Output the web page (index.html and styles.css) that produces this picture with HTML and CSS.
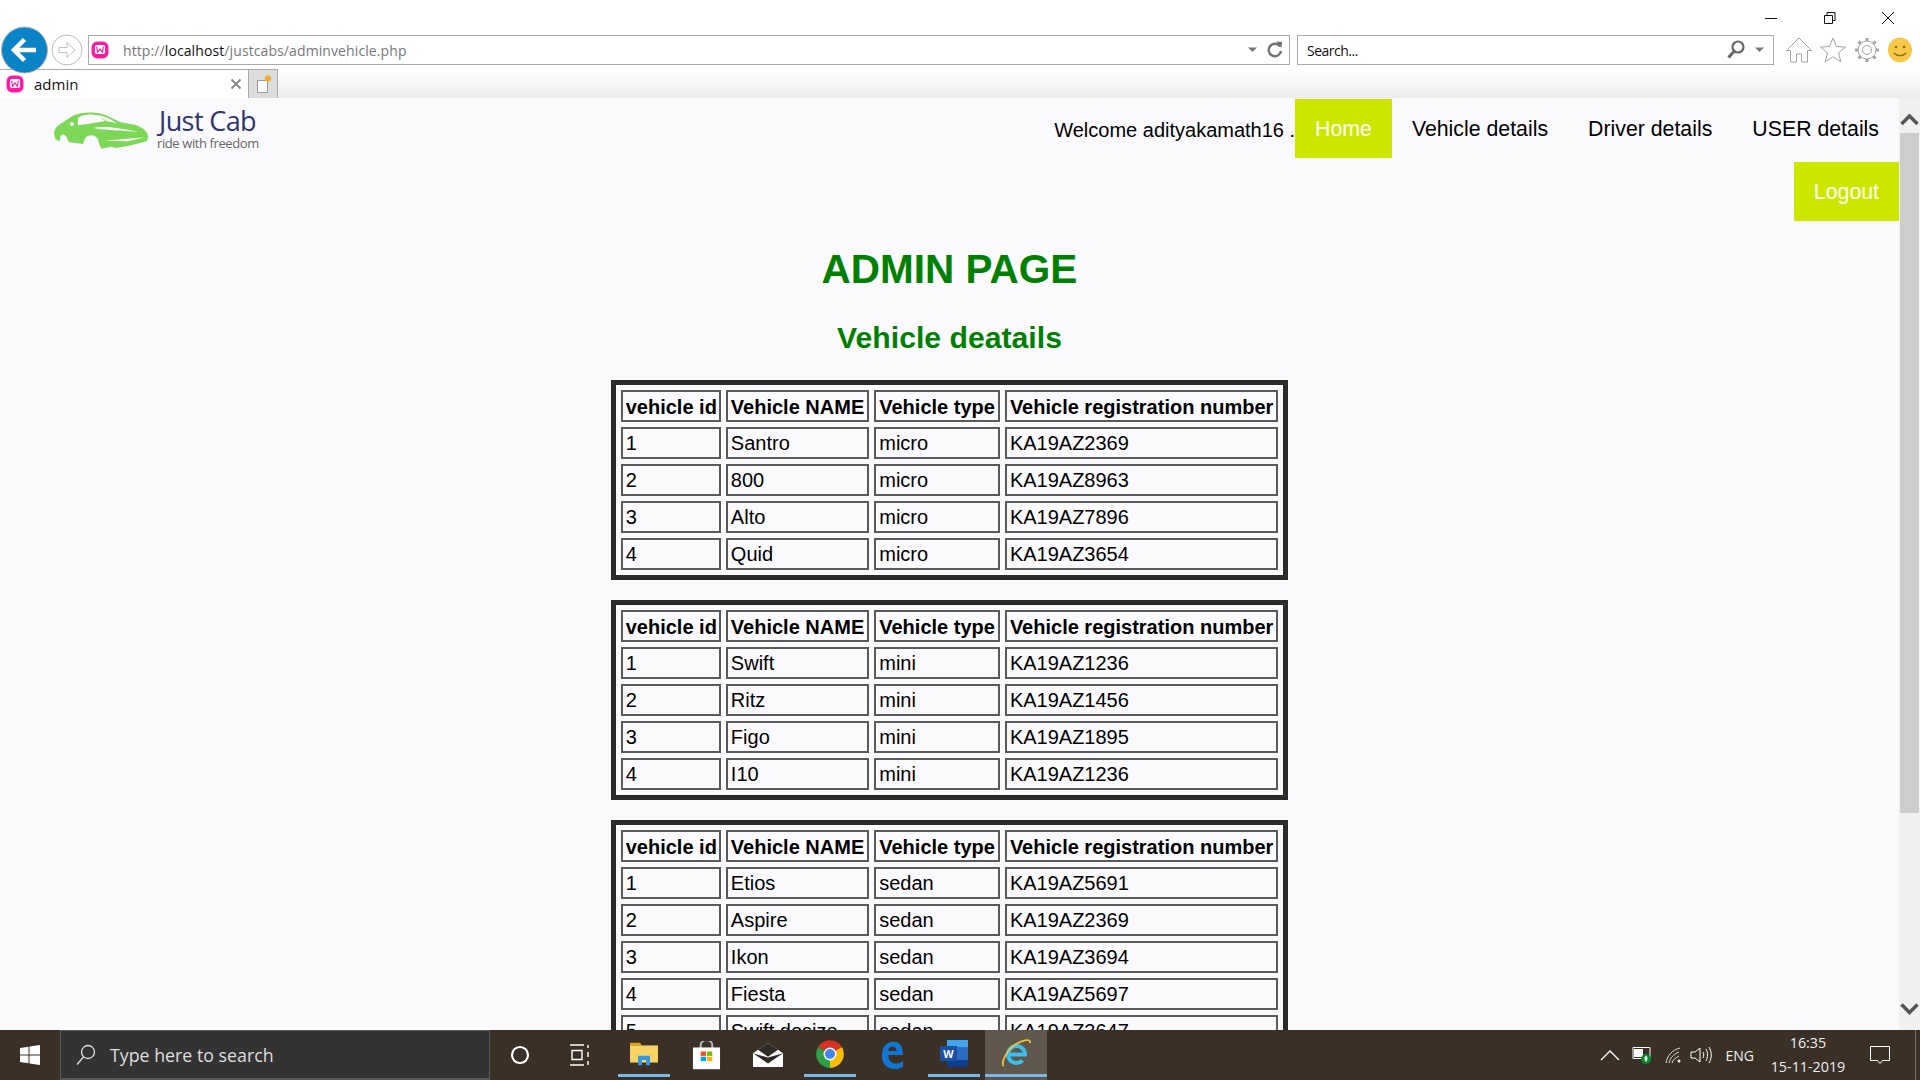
FILE: index.html
```html
<!DOCTYPE html>
<html lang="en">
<head>
  <meta charset="UTF-8">
  <title>admin</title>
  <link rel="stylesheet" href="styles.css">
</head>
<body>
  <!-- Browser chrome -->
  <div class="browser">
    <div class="titlebar">
      <svg class="win-btn" width="58" height="35" viewBox="0 0 58 35"><path d="M23 18.500h12" stroke="#111" fill="none"/></svg>
      <svg class="win-btn" width="58" height="35" viewBox="0 0 58 35"><path d="M24.500 15.500h8v8h-8zM27 15.500v-3h8v8h-2.500" stroke="#111" fill="none"/></svg>
      <svg class="win-btn" width="60" height="35" viewBox="0 0 60 35"><path d="M24 12l12 12M36 12l-12 12" stroke="#111" fill="none"/></svg>
    </div>

    <div class="toolbar">
      <div class="address-box">
        <svg class="favicon" width="18" height="18" viewBox="0 0 16 16"><rect x="0.500" y="0.500" width="15" height="15" rx="5" fill="#ff1aa3"/><rect x="3.500" y="3.500" width="9" height="8" rx="1.500" fill="#fff"/><path d="M5 5l.8 5 2.200-3 2.200 3 .8-5" stroke="#ff1aa3" fill="none"/></svg>
        <span class="url">http://<b>localhost</b>/justcabs/adminvehicle.php</span>
        <svg width="12" height="8" viewBox="0 0 12 8"><path d="M1 1.500h9L5.500 6z" fill="#777"/></svg>
        <svg class="refresh" width="20" height="20" viewBox="0 0 20 20"><path d="M15 6.500A6.200 6.200 0 1 0 16 11" stroke="#6f6f6f" stroke-width="2.400" fill="none"/><path d="M11 1.500l6 .5-.5 6z" fill="#6f6f6f"/></svg>
      </div>
      <div class="search-box">
        <span class="search-text">Search...</span>
        <svg width="20" height="22" viewBox="0 0 20 22"><circle cx="12" cy="8" r="5.500" stroke="#666" stroke-width="2.200" fill="none"/><path d="M8 12.500L2.500 18.500" stroke="#666" stroke-width="3"/></svg>
        <svg class="search-arrow" width="12" height="8" viewBox="0 0 12 8"><path d="M1 1.500h9L5.500 6z" fill="#777"/></svg>
      </div>
      <div class="tool-icons">
        <svg width="28" height="28" viewBox="0 0 28 28"><path d="M14 2L1.500 14.500h4V26h6v-8h5v8h6V14.500h4z" stroke="#a3a3a3" fill="#fff"/></svg>
        <svg width="28" height="28" viewBox="0 0 28 28"><path d="M14 2l3.500 8.500 9 .6-7 5.700 2.300 8.900L14 20.800l-7.800 4.900 2.300-8.900-7-5.700 9-.6z" stroke="#a3a3a3" fill="#fff"/></svg>
        <svg width="28" height="28" viewBox="0 0 28 28"><circle cx="14" cy="14" r="4.500" stroke="#a3a3a3" fill="none"/><circle cx="14" cy="14" r="9" stroke="#a3a3a3" fill="none"/><path d="M14 2v3M14 23v3M2 14h3M23 14h3M5.500 5.500l2.200 2.200M20.300 20.300l2.200 2.200M5.500 22.500l2.200-2.200M20.300 7.700l2.200-2.200" stroke="#a3a3a3" stroke-width="3"/></svg>
        <svg width="26" height="28" viewBox="0 0 26 28"><ellipse cx="13" cy="14" rx="12" ry="12.500" fill="#f5c744"/><circle cx="9" cy="11" r="1.300" fill="#8a6d1f"/><circle cx="17" cy="11" r="1.300" fill="#8a6d1f"/><path d="M7 17c3 3.500 9 3.500 12 0" stroke="#8a6d1f" stroke-width="1.300" fill="none"/></svg>
      </div>
    </div>

    <div class="tabstrip">
      <div class="tab">
        <svg width="18" height="18" viewBox="0 0 16 16"><rect x="0.500" y="0.500" width="15" height="15" rx="5" fill="#ff1aa3"/><rect x="3.500" y="3.500" width="9" height="8" rx="1.500" fill="#fff"/><path d="M5 5l.8 5 2.200-3 2.200 3 .8-5" stroke="#ff1aa3" fill="none"/></svg>
        <span class="tab-title">admin</span>
        <svg width="12" height="12" viewBox="0 0 12 12"><path d="M1.500 1.500l9 9M10.500 1.500l-9 9" stroke="#8a8a8a" stroke-width="2"/></svg>
      </div>
      <div class="new-tab">
        <svg width="18" height="20" viewBox="0 0 18 20"><path d="M3.500 6.500h10v12h-10z" fill="#fff" stroke="#999"/><path d="M14 1v7M10.500 4.500h7M11.500 2l5 5M16.500 2l-5 5" stroke="#f5a623" stroke-width="1.300"/></svg>
      </div>
    </div>

    <!-- back and forward sit over the toolbar and tab strip -->
    <svg class="nav-circles" width="86" height="50" viewBox="0 0 86 50">
      <circle cx="24.500" cy="25" r="23" fill="#0a84c6" stroke="#b5b5b5"/>
      <path d="M14 25h22M24.500 14.500L14 25l10.500 10.500" stroke="#fff" stroke-width="4.500" fill="none"/>
      <circle cx="67" cy="25" r="15" fill="#fff" stroke="#b9b9b9"/>
      <path d="M59 22.500h8v-5l8 7.500-8 7.500v-5h-8z" fill="#fff" stroke="#c2c2c2"/>
    </svg>
  </div>

  <div class="viewport">
    <div class="page">
      <div class="topbar">
        <div class="logo">
          <svg width="110" height="44" viewBox="0 0 330 132">
            <path d="M18 76C20 62 28 52 45 43L75 23C95 14 118 12 140 14C165 15 190 28 215 42L260 50C280 56 292 66 297 74L301 86L296 100L250 112L205 120L190 116L160 122L155 112C152 95 145 82 130 82C116 82 108 92 106 108L62 102L58 92C52 80 44 76 38 84L35 100L22 94z" fill="#7dd857"/>
            <path d="M90 30C98 22 118 19 136 20C150 21 160 30 172 39L120 48L89 52z" fill="#fafafd"/>
            <path d="M142 20C165 22 190 34 208 46L178 40z" fill="#fafafd"/>
            <path d="M135 60C165 54 205 58 272 72C235 68 180 68 135 60z" fill="#fafafd"/>
            <path d="M215 66L262 102L200 112C210 92 212 80 215 66z" fill="#7dd857"/>
            <circle cx="72" cy="48" r="6" fill="#fafafd"/>
            <path d="M170 98L290 88L240 100z" fill="#fafafd"/>
          </svg>
          <div class="logo-text">
            <div class="logo-name">Just Cab</div>
            <div class="logo-sub">ride with freedom</div>
          </div>
        </div>
        <ul class="nav-menu">
          <li class="welcome">Welcome adityakamath16 .</li>
          <li class="nav-link active">Home</li>
          <li class="nav-link">Vehicle details</li>
          <li class="nav-link">Driver details</li>
          <li class="nav-link">USER details</li>
          <li class="nav-link active">Logout</li>
        </ul>
      </div>

      <h1 class="page-title">ADMIN PAGE</h1>
      <h2 class="page-subtitle">Vehicle deatails</h2>

      <table class="vehicle-table">
        <tr><th>vehicle id</th><th>Vehicle NAME</th><th>Vehicle type</th><th>Vehicle registration number</th></tr>
        <tr><td>1</td><td>Santro</td><td>micro</td><td>KA19AZ2369</td></tr>
        <tr><td>2</td><td>800</td><td>micro</td><td>KA19AZ8963</td></tr>
        <tr><td>3</td><td>Alto</td><td>micro</td><td>KA19AZ7896</td></tr>
        <tr><td>4</td><td>Quid</td><td>micro</td><td>KA19AZ3654</td></tr>
      </table>

      <table class="vehicle-table">
        <tr><th>vehicle id</th><th>Vehicle NAME</th><th>Vehicle type</th><th>Vehicle registration number</th></tr>
        <tr><td>1</td><td>Swift</td><td>mini</td><td>KA19AZ1236</td></tr>
        <tr><td>2</td><td>Ritz</td><td>mini</td><td>KA19AZ1456</td></tr>
        <tr><td>3</td><td>Figo</td><td>mini</td><td>KA19AZ1895</td></tr>
        <tr><td>4</td><td>I10</td><td>mini</td><td>KA19AZ1236</td></tr>
      </table>

      <table class="vehicle-table">
        <tr><th>vehicle id</th><th>Vehicle NAME</th><th>Vehicle type</th><th>Vehicle registration number</th></tr>
        <tr><td>1</td><td>Etios</td><td>sedan</td><td>KA19AZ5691</td></tr>
        <tr><td>2</td><td>Aspire</td><td>sedan</td><td>KA19AZ2369</td></tr>
        <tr><td>3</td><td>Ikon</td><td>sedan</td><td>KA19AZ3694</td></tr>
        <tr><td>4</td><td>Fiesta</td><td>sedan</td><td>KA19AZ5697</td></tr>
        <tr><td>5</td><td>Swift desize</td><td>sedan</td><td>KA19AZ3647</td></tr>
      </table>
    </div>

    <div class="scrollbar">
      <svg class="scroll-arrow" width="21" height="35" viewBox="0 0 21 35"><path d="M2.500 26l8-8 8 8" stroke="#555" stroke-width="3.500" fill="none"/></svg>
      <div class="scroll-thumb"></div>
      <svg class="scroll-arrow" width="21" height="35" viewBox="0 0 21 35"><path d="M2.500 9.500l8 8 8-8" stroke="#555" stroke-width="3.500" fill="none"/></svg>
    </div>
  </div>

  <!-- Windows taskbar -->
  <div class="taskbar">
    <div class="start">
      <svg width="20" height="20" viewBox="0 0 20 20"><path d="M0 3l8.500-1.200v7.700H0zM9.500 1.600L20 0v9.500H9.500zM0 10.500h8.500v7.700L0 17zM9.500 10.500H20V20L9.500 18.400z" fill="#fff"/></svg>
    </div>
    <div class="task-search">
      <svg width="22" height="24" viewBox="0 0 22 24"><circle cx="13" cy="9" r="6.500" stroke="#ddd" stroke-width="1.300" fill="none"/><path d="M8.500 14L2 21.500" stroke="#ddd" stroke-width="1.300"/></svg>
      <span>Type here to search</span>
    </div>
    <div class="task-btn small">
      <svg width="20" height="20" viewBox="0 0 20 20"><circle cx="10" cy="10" r="8" stroke="#fff" stroke-width="2.200" fill="none"/></svg>
    </div>
    <div class="task-btn small task-view">
      <svg width="22" height="22" viewBox="0 0 22 22"><path d="M1 1h14M1 21h14M3 6.500h10v9H3zM19 1v3M19 8v5M19 17v4" stroke="#fff" stroke-width="1.400" fill="none"/></svg>
    </div>
    <div class="task-btn running">
      <svg width="28" height="24" viewBox="0 0 28 28" preserveAspectRatio="none"><path d="M0 1h10l2 3H0z" fill="#e3a21a"/><path d="M0 4h28v20H0z" fill="#f6d365"/><path d="M8 27V16h12v11h-4v-6h-4v6z" fill="#3a96dd"/></svg>
    </div>
    <div class="task-btn">
      <svg width="29" height="29" viewBox="0 0 30 36" preserveAspectRatio="none"><path d="M9 9V5a6 6 0 0 1 12 0v4" stroke="#bbb" stroke-width="2" fill="none"/><path d="M1 8h28v27H1z" fill="#fff"/><rect x="9" y="13" width="5.500" height="5.500" fill="#f25022"/><rect x="15.500" y="13" width="5.500" height="5.500" fill="#7fba00"/><rect x="9" y="19.500" width="5.500" height="5.500" fill="#00a4ef"/><rect x="15.500" y="19.500" width="5.500" height="5.500" fill="#ffb900"/></svg>
    </div>
    <div class="task-btn">
      <svg width="30" height="24" viewBox="0 0 30 28" preserveAspectRatio="none"><path d="M15 0L30 12v16H0V12z" fill="#fff"/><path d="M0 12l15 12 15-12-15 5z" fill="#2f2a25"/><path d="M15 0L5 8l10 8 10-8z" fill="#2f2a25"/></svg>
    </div>
    <div class="task-btn running">
      <svg width="28" height="28" viewBox="0 0 28 28"><path d="M14 14L2 7A14 14 0 0 1 26 7z" fill="#d93025"/><path d="M14 14L2 7A14 14 0 0 0 14 28z" fill="#2f9e44"/><path d="M14 14L26 7A14 14 0 0 1 14 28z" fill="#fbbc04"/><circle cx="14" cy="14" r="6.500" fill="#fff"/><circle cx="14" cy="14" r="5" fill="#4285f4"/></svg>
    </div>
    <div class="task-btn">
      <svg width="24" height="28" viewBox="0 0 26 36" preserveAspectRatio="none"><path d="M2 19C2 8 7 1 15 1c6 0 10 6 10 17H9c0 7 3 11 8 11 3 0 5-1 8-3v7c-3 2-6 3-9 3C7 36 2 29 2 19zm7-6h9c0-4-2-6-4-6-3 0-5 2-5 6z" fill="#0f78d4"/></svg>
    </div>
    <div class="task-btn running">
      <svg width="28" height="27" viewBox="0 0 28 27"><rect x="7" y="0" width="21" height="27" rx="1" fill="#2b6cc4"/><rect x="7" y="0" width="21" height="7" fill="#41a5ee"/><rect x="7" y="20" width="21" height="7" fill="#103f91"/><rect x="0" y="6" width="17" height="15" fill="#1a4fa3"/><text x="8.500" y="18" class="word-letter">W</text></svg>
    </div>
    <div class="task-btn running ie-active">
      <svg width="30" height="29" viewBox="0 0 30 29"><path d="M8 15.500H24A8.500 8.500 0 1 0 21.500 21.500" stroke="#3bc0ee" stroke-width="4" fill="none"/><path d="M3 27C-1 26 5 11 15 5C22 1 30-1 29 4" stroke="#f0c040" stroke-width="1.800" fill="none"/></svg>
    </div>

    <div class="tray">
      <svg width="24" height="14" viewBox="0 0 24 14"><path d="M3 12L12 3l9 9" stroke="#fff" stroke-width="1.300" fill="none"/></svg>
      <svg width="20" height="18" viewBox="0 0 20 18"><path d="M1 1.500h17v11H1z" stroke="#fff" fill="none"/><rect x="2" y="3" width="9" height="8" fill="#fff"/><circle cx="14" cy="13" r="5" fill="#0a8a30"/><path d="M14 9.500c2 2 2 4 0 6.500-2-2.500-2-4.500 0-6.500z" fill="#fff"/></svg>
      <svg class="wifi" width="18" height="18" viewBox="0 0 18 18"><path d="M1 17C2 10 7 4 15 2M4 17c1-5 5-9 10-11M7 17c1-3 3-5 7-7" stroke="#ddd" fill="none"/><circle cx="14" cy="15" r="1.500" fill="#fff"/></svg>
      <svg width="22" height="18" viewBox="0 0 22 18"><path d="M1 6h4l5-4v14l-5-4H1z" stroke="#fff" fill="none"/><path d="M13 6c1 2 1 4 0 6M16 3c2 4 2 8 0 12M19 1c3 5 3 11 0 16" stroke="#fff" fill="none"/></svg>
      <span class="lang">ENG</span>
      <div class="clock">
        <div>16:35</div>
        <div>15-11-2019</div>
      </div>
      <svg class="notify" width="22" height="20" viewBox="0 0 22 20"><path d="M1.500 1.500h19v14h-7l-2.500 3-2.500-3h-7z" stroke="#fff" fill="none"/></svg>
      <div class="show-desktop"></div>
    </div>
  </div>
</body>
</html>
```

FILE: styles.css
```css
body {
  margin: 0;
  height: 100vh;
  overflow: hidden;
  display: flex;
  flex-direction: column;
  font-family: "Liberation Sans", Arial, sans-serif;
  background: #fff;
}

/* Browser chrome */
.browser {
  position: relative;
  height: 98px;
  background: #fff;
  font-family: "Open Sans", sans-serif;
}

.titlebar {
  height: 35px;
  display: flex;
  justify-content: flex-end;
  padding-right: 2px;
}

.toolbar {
  height: 30px;
  display: flex;
  align-items: stretch;
  padding-left: 88px;
}

.address-box {
  width: 1202px;
  box-sizing: border-box;
  border: 1px solid #aaa;
  display: flex;
  align-items: center;
  padding: 0 4px 0 2px;
}

.favicon {
  margin-right: 14px;
}

.url {
  flex: 1;
  font-size: 14px;
  color: #777;
  letter-spacing: 0.1px;
}

.url b {
  font-weight: 400;
  color: #111;
}

.refresh {
  margin-left: 6px;
}

.search-box {
  width: 477px;
  margin-left: 7px;
  box-sizing: border-box;
  border: 1px solid #aaa;
  display: flex;
  align-items: center;
  padding: 0 7px 0 9px;
}

.search-text {
  flex: 1;
  font-size: 14px;
  letter-spacing: -0.5px;
  color: #111;
}

.search-arrow {
  margin-left: 8px;
}

.tool-icons {
  display: flex;
  align-items: center;
  gap: 6px;
  margin-left: 11px;
}

.tabstrip {
  height: 29px;
  margin-top: 4px;
  display: flex;
  background: linear-gradient(#fff, #ececec);
}

.tab {
  width: 249px;
  box-sizing: border-box;
  background: #fff;
  border-top: 1px solid #aaa;
  border-right: 1px solid #aaa;
  display: flex;
  align-items: center;
  padding: 0 6px;
}

.tab-title {
  flex: 1;
  margin-left: 10px;
  font-size: 15px;
  color: #111;
}

.new-tab {
  width: 29px;
  box-sizing: border-box;
  background: #dcdcdc;
  border-top: 1px solid #aaa;
  border-right: 1px solid #aaa;
  display: flex;
  align-items: center;
  justify-content: center;
}

.nav-circles {
  position: absolute;
  top: 25px;
  left: 0;
}

/* Page */
.viewport {
  flex: 1;
  min-height: 0;
  display: flex;
}

.page {
  flex: 1;
  overflow: hidden;
  background: #fafafd;
}

.topbar {
  display: flex;
  justify-content: space-between;
  align-items: flex-start;
  padding-top: 1px;
}

.logo {
  display: flex;
  align-items: flex-start;
  margin: 9px 0 0 48px;
}

.logo-text {
  margin: -2px 0 0 1px;
  font-family: "Open Sans", sans-serif;
}

.logo-name {
  font-size: 27px;
  line-height: 30px;
  color: #2b3572;
  letter-spacing: -0.6px;
}

.logo-sub {
  margin-left: -2px;
  font-size: 13px;
  line-height: 14px;
  color: #666;
  letter-spacing: -0.4px;
}

.nav-menu {
  width: 860px;
  margin: 0;
  padding: 0;
  list-style: none;
  display: flex;
  flex-wrap: wrap;
  justify-content: flex-end;
  row-gap: 4px;
  font-size: 21.3px;
}

.welcome {
  height: 57px;
  padding-top: 2px;
  font-size: 20px;
  line-height: 59px;
  color: #000;
}

.nav-link {
  padding: 19px 20px 17px;
  line-height: 23px;
  color: #000;
}

.nav-link.active {
  background: #cde600;
  color: #fff;
}

.page-title {
  margin: 25px 0 0;
  font-size: 40.5px;
  line-height: 46px;
  text-align: center;
  color: #008000;
}

.page-subtitle {
  margin: 29px 0 25px;
  font-size: 30.2px;
  line-height: 34px;
  text-align: center;
  color: #008000;
}

.vehicle-table {
  margin: 0 auto 20px;
  border: 5px solid #2b2b2b;
  border-spacing: 5px;
  font-size: 20px;
  color: #000;
}

.vehicle-table th,
.vehicle-table td {
  height: 28px;
  padding: 0 3px;
  border: 2px solid #5a5a5a;
  text-align: left;
}

.vehicle-table th {
  height: 26px;
  padding-top: 2px;
}

.vehicle-table th:first-child,
.vehicle-table td:first-child {
  padding-right: 2px;
}

/* Scrollbar */
.scrollbar {
  width: 21px;
  background: #f0f0f0;
  display: flex;
  flex-direction: column;
}

.scroll-arrow {
  flex: none;
}

.scroll-thumb {
  width: 19px;
  margin-left: 1px;
  height: 680px;
  background: #cdcdcd;
}

.scrollbar .scroll-arrow:last-child {
  margin-top: auto;
}

/* Taskbar */
.taskbar {
  height: 50px;
  flex: none;
  display: flex;
  align-items: stretch;
  background: #3a3026;
  color: #fff;
  font-family: "Open Sans", sans-serif;
}

.start {
  width: 60px;
  display: flex;
  align-items: center;
  justify-content: center;
}

.task-search {
  width: 430px;
  box-sizing: border-box;
  background: #333;
  border: 1px solid #5a5a5a;
  border-bottom-width: 2px;
  display: flex;
  align-items: center;
  padding-left: 14px;
  gap: 13px;
  font-size: 17.8px;
  color: #ddd;
}

.task-btn {
  width: 62px;
  box-sizing: border-box;
  display: flex;
  align-items: center;
  justify-content: center;
}

.task-btn.small {
  width: 60px;
}

.task-view {
  margin-right: 3px;
}

.task-btn.running {
  border-bottom: 3px solid transparent;
  background: linear-gradient(#76b9ed, #76b9ed) center bottom / 52px 3px no-repeat;
}

.task-btn.ie-active {
  background: #5f574c linear-gradient(#76b9ed, #76b9ed) bottom / 100% 3px no-repeat;
}

.word-letter {
  font: bold 11px "Liberation Sans", sans-serif;
  fill: #fff;
  text-anchor: middle;
}

.tray {
  margin-left: auto;
  display: flex;
  align-items: center;
  gap: 10px;
}

.wifi {
  margin: 0 -3px 0 3px;
}

.lang {
  margin-left: 4px;
  font-size: 14px;
  color: #eee;
}

.clock {
  width: 88px;
  text-align: center;
  font-size: 14.3px;
  line-height: 24px;
  color: #eee;
}

.notify {
  margin-left: 7px;
}

.show-desktop {
  width: 1px;
  height: 100%;
  margin-left: 14px;
  margin-right: 4px;
  background: #77706a;
}
```
